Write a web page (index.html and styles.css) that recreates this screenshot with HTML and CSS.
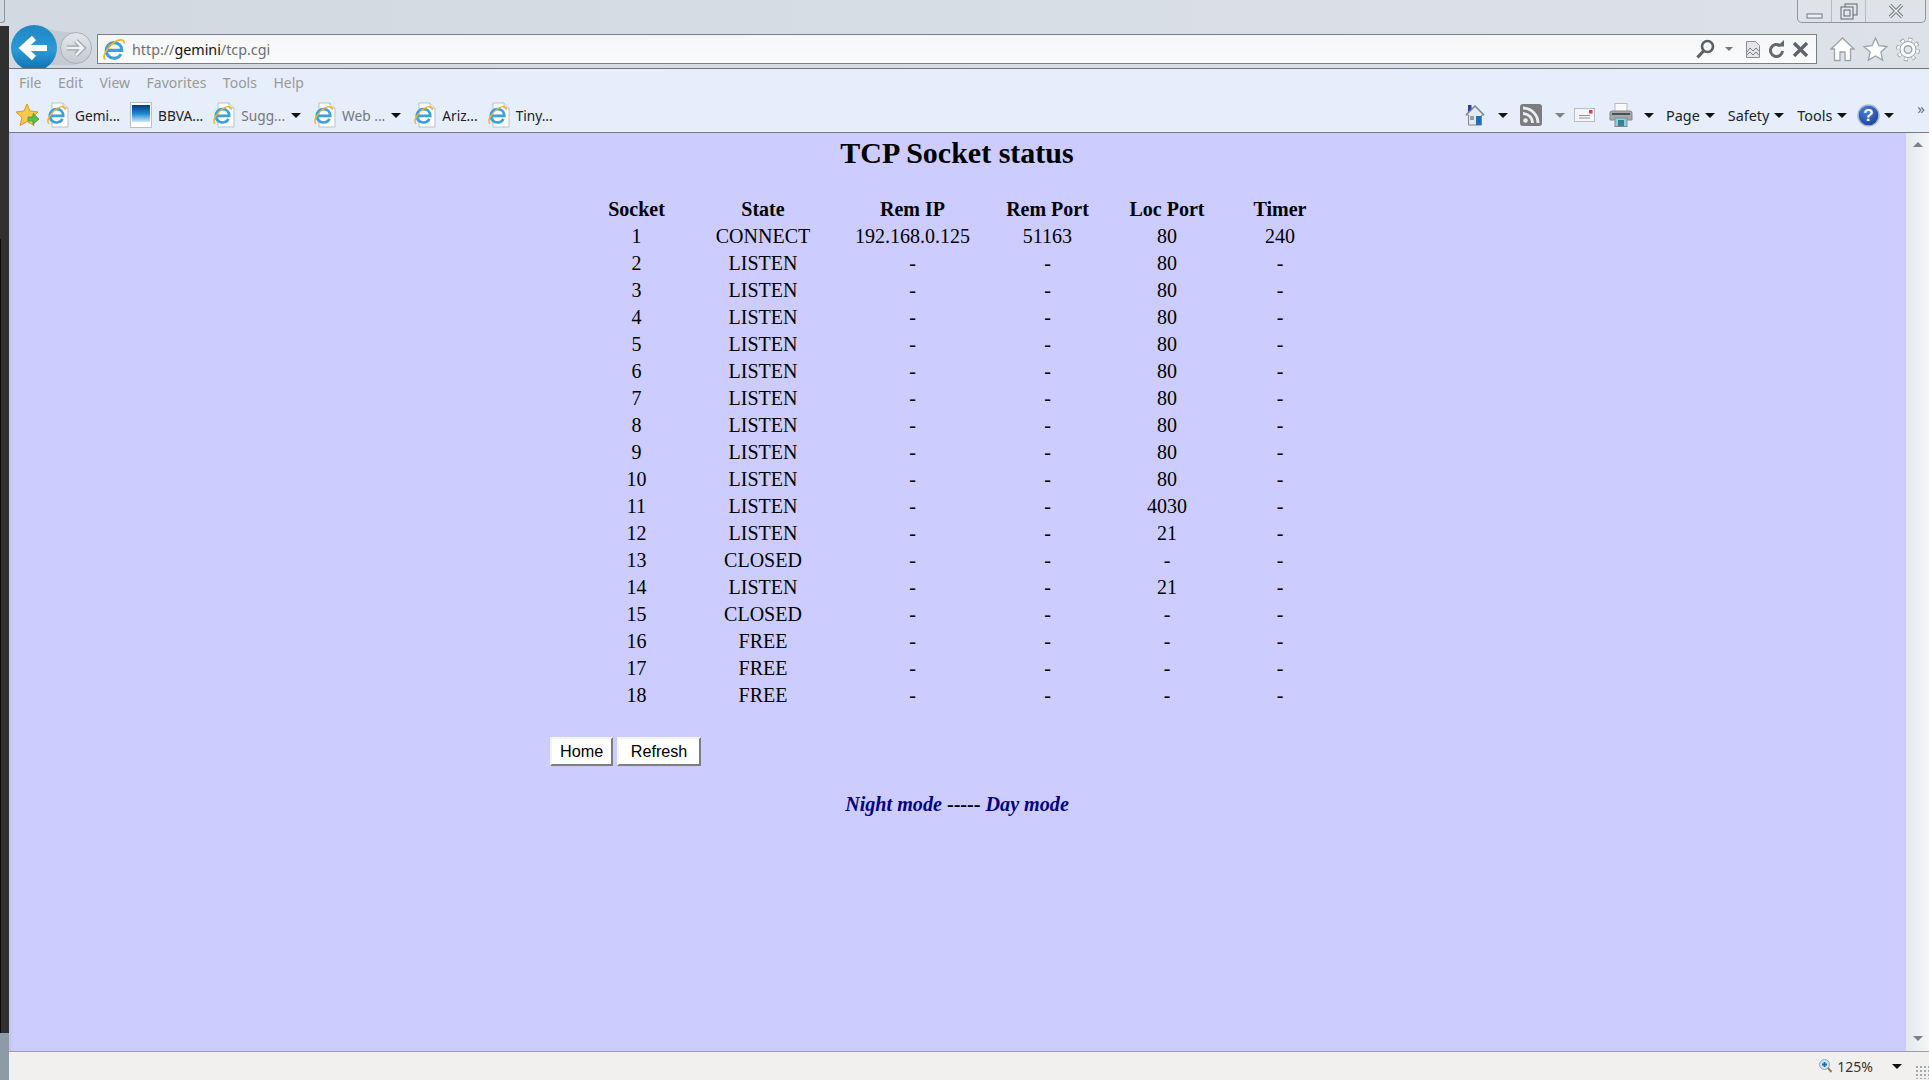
FILE: index.html
```html
<!DOCTYPE html>
<html lang="en">
<head>
  <meta charset="UTF-8" />
  <title>TCP Socket status</title>
  <link rel="stylesheet" href="styles.css">
</head>
<body>

<svg class="defs" width="0" height="0">
  <symbol id="ie" viewBox="0 0 24 24">
    <path d="M3.500 13h17c0-5-3.500-8.500-8.500-8.500S3.500 8.500 3.500 13s3.500 8.500 8.500 8.500c3.500 0 6-1.500 7.500-4.500" fill="none" stroke="#3aa0dc" stroke-width="3.400"/>
    <path d="M2.500 23C-2 19 6 8 13 3.500c5-3 10.500-3 10 2" fill="none" stroke="#f0b429" stroke-width="1.800"/>
  </symbol>
  <symbol id="iepage" viewBox="0 0 22 26">
    <path d="M5 1h11l5 5v19H5z" fill="#fff" stroke="#b9bfc6"/>
    <path d="M16 1v5h5" fill="#e8ecf0" stroke="#b9bfc6"/>
    <use href="#ie" x="0" y="3" width="19" height="20"/>
  </symbol>
</svg>

<div class="strip"></div>

<div class="chrome">
  <div class="titlebar">
    <div class="corner"></div>
    <div class="winbtns">
      <div class="winbtn winbtn-min"><svg width="17" height="8"><rect x="1" y="2" width="15" height="4" fill="#eef1f4" stroke="#6f777f"/></svg></div>
      <div class="winbtn winbtn-max"><svg width="18" height="17"><rect x="5" y="1" width="12" height="11" fill="none" stroke="#5f676f"/><rect x="1" y="4" width="12" height="12" fill="#e3e7ec" stroke="#5f676f"/><rect x="4" y="7" width="6" height="6" fill="none" stroke="#5f676f"/></svg></div>
      <div class="winbtn winbtn-close"><svg width="16" height="14"><path d="M2 1l12 12M14 1L2 13" stroke="#6f777f" stroke-width="3.400"/><path d="M2 1l12 12M14 1L2 13" stroke="#f2f4f6" stroke-width="1.400"/></svg></div>
    </div>
  </div>
  <div class="navbar">
    <svg class="navbtns" width="82" height="46" viewBox="0 0 82 46">
      <defs>
        <linearGradient id="backfill" x1="0" y1="0" x2="0" y2="1">
          <stop offset="0" stop-color="#1f86c4"/>
          <stop offset="0.55" stop-color="#2a9ad6"/>
          <stop offset="1" stop-color="#0f6eae"/>
        </linearGradient>
        <linearGradient id="fwdfill" x1="0" y1="0" x2="0" y2="1">
          <stop offset="0" stop-color="#e4e7ea"/>
          <stop offset="1" stop-color="#c4cad0"/>
        </linearGradient>
      </defs>
      <path d="M30 0c12 6 22 7 36 7.500V40H30z" fill="#c3cad1"/>
      <circle cx="66" cy="23" r="15.500" fill="url(#fwdfill)" stroke="#a9b0b7"/>
      <path d="M57 23h15M66 16l7 7-7 7" fill="none" stroke="#9ba2a9" stroke-width="5"/>
      <path d="M57 23h15M66 16l7 7-7 7" fill="none" stroke="#eef0f2" stroke-width="2.600"/>
      <circle cx="24" cy="23" r="23" fill="url(#backfill)"/>
      <path d="M37 23H15M24 13L13 23l11 10" fill="none" stroke="#fff" stroke-width="6"/>
    </svg>
    <div class="address">
      <svg class="addr-ie" width="22" height="23"><use href="#ie" width="22" height="23"/></svg>
      <span class="url">http://<b>gemini</b>/tcp.cgi</span>
      <svg class="addr-search" width="19" height="20" viewBox="0 0 19 20"><circle cx="11.500" cy="7.500" r="5.500" fill="none" stroke="#5c5f62" stroke-width="2.600"/><path d="M7.500 12L1.500 18.500" stroke="#5c5f62" stroke-width="3.200"/></svg>
      <div class="caret caret-small"></div>
      <svg class="addr-compat" width="14" height="17" viewBox="0 0 14 17"><path d="M.5.5h9l4 4v12H.5z" fill="#e3e5e8" stroke="#8b8f93"/><path d="M1 11l3-4 3 3 3-3 3 3M1 14l3-3 3 3 3-3 3 3" fill="none" stroke="#7c8085"/></svg>
      <svg class="addr-refresh" width="17" height="19" viewBox="0 0 17 19"><path d="M12.500 6a6 6 0 1 0 2 5" fill="none" stroke="#66696d" stroke-width="3"/><path d="M9 6.500h7V0z" fill="#66696d"/></svg>
      <svg class="addr-stop" width="17" height="15" viewBox="0 0 17 15"><path d="M2 1l13 13M15 1L2 14" stroke="#5f6266" stroke-width="3.400"/></svg>
    </div>
    <svg class="ctl ctl-home" width="25" height="25" viewBox="0 0 25 25"><path d="M12.500 1L1 12h3.500v11.500h5.500V15h5v8.500h5.500V12H24z" fill="#fff" stroke="#9aa4ad" stroke-width="1.300"/></svg>
    <svg class="ctl ctl-star" width="25" height="25" viewBox="0 0 25 25"><path d="M12.500 1l3.400 7.600 8.100.9-6.100 5.500 1.700 8.100-7.100-4.100-7.100 4.100 1.700-8.100L1 9.500l8.100-.9z" fill="#fff" stroke="#9aa4ad" stroke-width="1.300"/></svg>
    <svg class="ctl ctl-gear" width="24" height="25" viewBox="0 0 24 25"><g transform="translate(12 12.500)"><circle r="9.500" fill="none" stroke="#9aa4ad" stroke-width="5" stroke-dasharray="3.700 3.760"/><circle r="9.500" fill="none" stroke="#fff" stroke-width="3" stroke-dasharray="2.700 4.760" stroke-dashoffset="-.5"/><circle r="8" fill="#fff" stroke="#9aa4ad"/><circle r="3.800" fill="#e4e8ec" stroke="#9aa4ad" stroke-width="1.400"/></g></svg>
  </div>
</div>

<div class="toolbars">
  <div class="menubar">
    <span>File</span>
    <span>Edit</span>
    <span>View</span>
    <span>Favorites</span>
    <span>Tools</span>
    <span>Help</span>
  </div>
  <div class="favbar">
    <svg class="favstar" width="24" height="24" viewBox="0 0 24 24"><path d="M11 1l3 7 8 1-6 5.500 2 8-7-4-7 4 2-8L0 9l8-1z" fill="#f7c948" stroke="#d9982b"/><path d="M12 14h5v-3.500l6 5.500-6 5.500V18h-5z" fill="#5cc04a" stroke="#3b8f33" stroke-width=".7"/></svg>
    <div class="fav"><svg width="22" height="26"><use href="#iepage" width="22" height="26"/></svg><span>Gemi...</span></div>
    <div class="fav"><svg width="22" height="26" viewBox="0 0 22 26"><defs><linearGradient id="bbva" x1="0" y1="0" x2="0" y2="1"><stop offset="0" stop-color="#063a7e"/><stop offset=".5" stop-color="#1a86d0"/><stop offset="1" stop-color="#cfe8f8"/></linearGradient></defs><rect x=".5" y=".5" width="21" height="25" fill="#fff" stroke="#b9bfc6"/><rect x="2" y="3" width="18" height="17" fill="url(#bbva)"/></svg><span>BBVA...</span></div>
    <div class="fav fav-menu"><svg width="22" height="26"><use href="#iepage" width="22" height="26"/></svg><span class="gray">Sugg...</span><div class="caret"></div></div>
    <div class="fav fav-menu"><svg width="22" height="26"><use href="#iepage" width="22" height="26"/></svg><span class="gray">Web ...</span><div class="caret"></div></div>
    <div class="fav"><svg width="22" height="26"><use href="#iepage" width="22" height="26"/></svg><span>Ariz...</span></div>
    <div class="fav"><svg width="22" height="26"><use href="#iepage" width="22" height="26"/></svg><span>Tiny...</span></div>

    <div class="tools">
      <div class="tool tool-wide">
        <svg width="20" height="22" viewBox="0 0 20 22"><path d="M10 2L1 11h2.500v10h13V11H19z" fill="#e4e9ee" stroke="#7d8892"/><path d="M1 11l9-9 9 9" fill="none" stroke="#6f8a9e" stroke-width="1.500"/><path d="M3 1h3.500v4L3 8z" fill="#2b3f9c"/><rect x="5" y="12" width="4" height="4" fill="#8fa0ad"/><rect x="11" y="12" width="5" height="9" fill="#1f6fb8"/></svg>
        <div class="caret"></div>
      </div>
      <div class="tool tool-wide tool-rss">
        <svg width="22" height="22" viewBox="0 0 22 22"><rect width="22" height="22" rx="3" fill="#7b7d80"/><circle cx="5.500" cy="16.500" r="2.300" fill="#eee"/><path d="M3 9.500a9.500 9.500 0 0 1 9.500 9.500M3 4a15 15 0 0 1 15 15" fill="none" stroke="#eee" stroke-width="2.800"/></svg>
        <div class="caret caret-gray"></div>
      </div>
      <div class="tool tool-mail">
        <svg width="21" height="14" viewBox="0 0 21 14"><rect x=".5" y=".5" width="20" height="13" fill="#f4f5f7" stroke="#b7bcc2"/><rect x="15" y="2" width="3.500" height="3.500" fill="#d8434a"/><path d="M5 7.500h11M5 10h11" stroke="#8d9298"/></svg>
      </div>
      <div class="tool tool-print">
        <svg width="24" height="24" viewBox="0 0 24 24"><rect x="6" y=".5" width="12" height="9" fill="#fafafa" stroke="#bbb"/><path d="M1 10q0-2 2-2h18q2 0 2 2v7H1z" fill="#a4a9ae" stroke="#85898d"/><rect x="3" y="10" width="18" height="2" fill="#4b4f53"/><rect x="6" y="15" width="12" height="8.500" fill="#8ccfd9" stroke="#85898d"/><rect x="9" y="17" width="6" height="6" fill="#2a8796"/></svg>
        <div class="caret"></div>
      </div>
      <div class="tool"><span>Page</span><div class="caret"></div></div>
      <div class="tool"><span>Safety</span><div class="caret"></div></div>
      <div class="tool"><span>Tools</span><div class="caret"></div></div>
      <div class="tool tool-help">
        <svg width="23" height="23" viewBox="0 0 23 23"><defs><radialGradient id="helpfill" cx=".4" cy=".3" r=".8"><stop offset="0" stop-color="#4d7fd8"/><stop offset="1" stop-color="#163c92"/></radialGradient></defs><circle cx="11.500" cy="11.500" r="10.500" fill="url(#helpfill)" stroke="#a8b9d8" stroke-width="1.500"/><text class="help-mark" x="11.500" y="17" text-anchor="middle">?</text></svg>
        <div class="caret"></div>
      </div>
      <span class="chevrons">&raquo;</span>
    </div>
  </div>
</div>

<div class="viewport">
  <main class="page">
    <h1>TCP Socket status</h1>
    <div class="contenido">
      <table class="sockets">
        <colgroup>
          <col class="c-socket"><col class="c-state"><col class="c-ip"><col class="c-rport"><col class="c-lport"><col class="c-timer">
        </colgroup>
        <tr><th>Socket</th><th>State</th><th>Rem IP</th><th>Rem Port</th><th>Loc Port</th><th>Timer</th></tr>
        <tr><td>1</td><td>CONNECT</td><td>192.168.0.125</td><td>51163</td><td>80</td><td>240</td></tr>
        <tr><td>2</td><td>LISTEN</td><td>-</td><td>-</td><td>80</td><td>-</td></tr>
        <tr><td>3</td><td>LISTEN</td><td>-</td><td>-</td><td>80</td><td>-</td></tr>
        <tr><td>4</td><td>LISTEN</td><td>-</td><td>-</td><td>80</td><td>-</td></tr>
        <tr><td>5</td><td>LISTEN</td><td>-</td><td>-</td><td>80</td><td>-</td></tr>
        <tr><td>6</td><td>LISTEN</td><td>-</td><td>-</td><td>80</td><td>-</td></tr>
        <tr><td>7</td><td>LISTEN</td><td>-</td><td>-</td><td>80</td><td>-</td></tr>
        <tr><td>8</td><td>LISTEN</td><td>-</td><td>-</td><td>80</td><td>-</td></tr>
        <tr><td>9</td><td>LISTEN</td><td>-</td><td>-</td><td>80</td><td>-</td></tr>
        <tr><td>10</td><td>LISTEN</td><td>-</td><td>-</td><td>80</td><td>-</td></tr>
        <tr><td>11</td><td>LISTEN</td><td>-</td><td>-</td><td>4030</td><td>-</td></tr>
        <tr><td>12</td><td>LISTEN</td><td>-</td><td>-</td><td>21</td><td>-</td></tr>
        <tr><td>13</td><td>CLOSED</td><td>-</td><td>-</td><td>-</td><td>-</td></tr>
        <tr><td>14</td><td>LISTEN</td><td>-</td><td>-</td><td>21</td><td>-</td></tr>
        <tr><td>15</td><td>CLOSED</td><td>-</td><td>-</td><td>-</td><td>-</td></tr>
        <tr><td>16</td><td>FREE</td><td>-</td><td>-</td><td>-</td><td>-</td></tr>
        <tr><td>17</td><td>FREE</td><td>-</td><td>-</td><td>-</td><td>-</td></tr>
        <tr><td>18</td><td>FREE</td><td>-</td><td>-</td><td>-</td><td>-</td></tr>
      </table>
      <div class="botones">
        <button>Home</button>
        <button>Refresh</button>
      </div>
      <p class="modos"><a>Night mode</a> ----- <a>Day mode</a></p>
    </div>
  </main>
  <div class="scrollbar">
    <div class="arrow-up"></div>
    <div class="arrow-down"></div>
  </div>
</div>

<footer class="status">
  <svg width="13" height="14" viewBox="0 0 13 14"><circle cx="5.500" cy="5.500" r="5" fill="#cfe3f2" stroke="#8fa9bd"/><path d="M3 5.500h5M5.500 3v5" stroke="#1c6fb0" stroke-width="1.800"/><path d="M9 9l3.500 4" stroke="#9a7b54" stroke-width="2"/></svg>
  <span class="zoom-text">125%</span>
  <div class="caret"></div>
  <div class="grip"></div>
</footer>

</body>
</html>
```

FILE: styles.css
```css
html, body {
  height: 100%;
}

body {
  margin: 0;
  display: flex;
  flex-direction: column;
  height: 100vh;
  overflow: hidden;
  position: relative;
  font-family: "Noto Sans", sans-serif;
  font-size: 14px;
  color: #222;
  background: #e5eefa;
}

.defs {
  position: absolute;
}

/* dark edge of the window behind, lies over the chrome */
.strip {
  position: absolute;
  left: 0;
  top: 26px;
  bottom: 0;
  width: 9px;
  z-index: 2;
  background: linear-gradient(to bottom, #303030 1007px, #8d9ba6 1007px);
}

.strip::before {
  content: "";
  position: absolute;
  left: 0;
  top: 213px;
  height: 794px;
  width: 1px;
  background: #0c0c0c;
}

.chrome {
  height: 68px;
  flex: none;
  overflow: hidden;
  background: linear-gradient(to right, #d3d9e0, #d8dee5 60%, #dde2e8);
}

.titlebar {
  height: 34px;
  display: flex;
  justify-content: space-between;
  align-items: flex-start;
  padding-right: 3px;
}

.corner {
  width: 4px;
  height: 22px;
  border: 1px solid #8d959d;
  border-width: 0 1px 1px 0;
  border-radius: 0 0 3px 0;
}

.winbtns {
  display: flex;
  height: 22px;
  border: 1px solid #8d959d;
  border-top: 0;
  border-radius: 0 0 5px 5px;
  background: #dfe3e8;
}

.winbtn {
  display: flex;
  justify-content: center;
  align-items: center;
  border-right: 1px solid #b3bac1;
}

.winbtn-min {
  width: 34px;
  align-items: flex-end;
  padding-bottom: 2px;
  box-sizing: border-box;
}

.winbtn-max {
  width: 33px;
}

.winbtn-close {
  width: 59px;
  border-right: 0;
}

.navbar {
  height: 34px;
  display: flex;
  align-items: flex-start;
  padding: 0 9px 0 10px;
}

.navbtns {
  flex: none;
  margin-top: -9px;
  margin-right: 5px;
}

.address {
  flex: 1;
  height: 30px;
  box-sizing: border-box;
  display: flex;
  align-items: center;
  background: linear-gradient(to bottom, #f4f6f8, #fbfbfc);
  border: 1px solid #7b8086;
  padding: 0 7px 0 5px;
  margin-right: 13px;
}

.addr-ie {
  margin-right: 7px;
}

.url {
  flex: 1;
  font-size: 14.3px;
  color: #6e6e6e;
}

.url b {
  font-weight: normal;
  color: #111;
}

.addr-search {
  margin-right: 10px;
}

.addr-compat {
  margin-left: 13px;
  margin-right: 8px;
}

.addr-refresh {
  margin-right: 7px;
}

.ctl {
  flex: none;
  margin-top: 3px;
}

.ctl-star {
  margin-left: 8px;
}

.ctl-gear {
  margin-left: 8px;
}

.toolbars {
  flex: none;
  height: 65px;
  box-sizing: border-box;
  background: #e5eefa;
  border-top: 1px solid #6f757b;
  border-bottom: 1px solid #777c82;
}

.menubar {
  height: 27px;
  display: flex;
  align-items: center;
  gap: 16.5px;
  padding-left: 19px;
  color: #999;
}

.favbar {
  height: 36px;
  box-sizing: border-box;
  padding: 2px 0 0 16px;
  display: flex;
  align-items: center;
  font-size: 13.7px;
}

.favstar {
  margin-right: 7px;
}

.fav {
  display: flex;
  align-items: center;
  gap: 6px;
  margin-right: 10px;
}

.fav-menu {
  margin-right: 13px;
}

.gray {
  color: #777;
}

.tools {
  margin-left: auto;
  display: flex;
  align-items: center;
  gap: 13px;
  padding-right: 4px;
  font-size: 14.4px;
}

.tool {
  display: flex;
  align-items: center;
  gap: 5px;
}

.tool-wide {
  gap: 13px;
}

.tool-rss {
  margin-left: -1px;
}

.tool-mail {
  margin-left: -4px;
}

.tool-print {
  gap: 11px;
  margin-left: 1px;
  margin-right: -1px;
}

.tool-help {
  gap: 4px;
  margin-left: -3px;
}

.help-mark {
  font-family: "Liberation Sans", sans-serif;
  font-weight: bold;
  font-size: 17px;
  fill: #fff;
}

.chevrons {
  align-self: flex-start;
  margin-left: 10px;
  margin-top: -5px;
  font-size: 15px;
  color: #66727e;
}

.caret {
  flex: none;
  width: 0;
  height: 0;
  border-left: 5px solid transparent;
  border-right: 5px solid transparent;
  border-top: 5px solid #111;
}

.caret-gray {
  border-top-color: #808488;
}

.caret-small {
  border-left-width: 4px;
  border-right-width: 4px;
  border-top: 4px solid #777;
}

.viewport {
  flex: 1;
  display: flex;
  min-height: 0;
}

.page {
  flex: 1;
  padding: 2px 0 0 8px;
  background: linear-gradient(to right, #c4c4e6 9px, #ccccff 14px);
  font-family: "Liberation Serif", serif;
  font-size: 20px;
  color: #000;
}

.page h1 {
  margin: 0 0 26px;
  font-size: 30px;
  line-height: 35px;
  text-align: center;
}

.contenido {
  width: 814px;
  margin: 0 auto;
}

.sockets {
  table-layout: fixed;
  width: 749px;
  margin: 0 auto;
  border-collapse: collapse;
}

.c-socket { width: 108px; }
.c-state { width: 145px; }
.c-ip { width: 154px; }
.c-rport { width: 116px; }
.c-lport { width: 123px; }
.c-timer { width: 103px; }

.sockets th,
.sockets td {
  height: 27px;
  padding: 0;
  text-align: center;
  line-height: 23px;
}

.botones {
  display: flex;
  gap: 4px;
  margin-top: 28px;
}

.botones button {
  height: 29px;
  padding: 0 8px;
  background: #fff;
  color: #000;
  font-family: "Liberation Sans", sans-serif;
  font-size: 16.2px;
  border: 2px solid;
  border-color: #f4f4f4 #7d7d7d #7d7d7d #f4f4f4;
}

.botones button:last-child {
  padding: 0 11.5px;
}

.modos {
  margin: 27px 0 0;
  text-align: center;
  font-size: 20.15px;
  font-weight: bold;
}

.modos a {
  font-style: italic;
  color: #000080;
}

.scrollbar {
  flex: none;
  width: 23px;
  display: flex;
  flex-direction: column;
  justify-content: space-between;
  align-items: center;
  padding: 9px 0 10px;
  box-sizing: border-box;
  background: linear-gradient(to right, #e4e8ed, #f4f6f9);
}

.arrow-up {
  border-left: 5px solid transparent;
  border-right: 5px solid transparent;
  border-bottom: 5px solid #7d8084;
}

.arrow-down {
  border-left: 5px solid transparent;
  border-right: 5px solid transparent;
  border-top: 5px solid #7d8084;
}

.status {
  flex: none;
  height: 29px;
  box-sizing: border-box;
  display: flex;
  justify-content: flex-end;
  align-items: center;
  background: #f1f0ee;
  border-top: 1px solid #9a9fa4;
  color: #333;
}

.zoom-text {
  margin-left: 5px;
  margin-right: 19px;
}

.grip {
  width: 14px;
  height: 14px;
  margin: 12px 0 0 13px;
  background-image: radial-gradient(#a4a8ac 1px, transparent 1.2px);
  background-size: 4px 4px;
}
```
